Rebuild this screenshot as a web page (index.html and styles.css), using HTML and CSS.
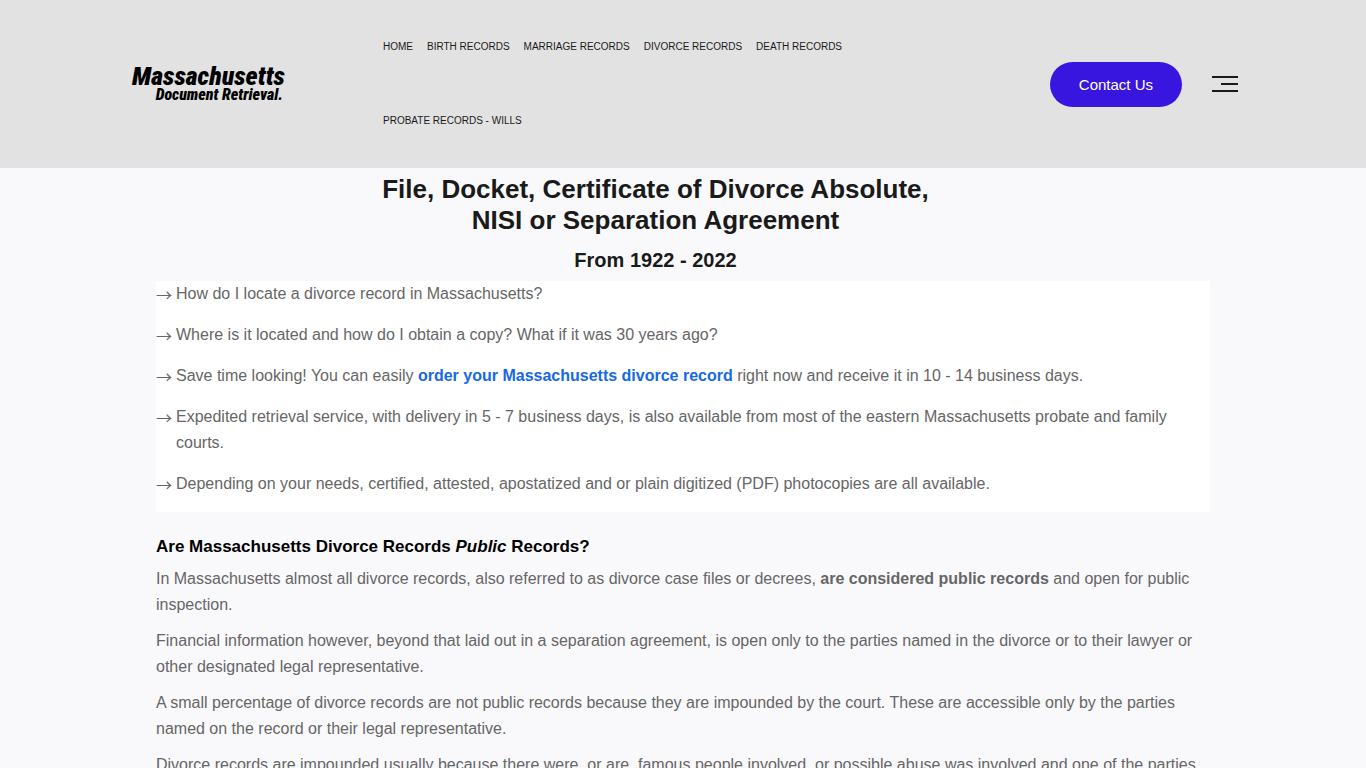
FILE: index.html
```html
<!DOCTYPE html>
<html lang="en">

<head>
    <title>Massachusetts Divorce Records</title>
    <meta charset="UTF-8">
    <meta name="viewport" content="width=device-width, initial-scale=1.0">
    <link rel="stylesheet" href="styles.css">
</head>

<body>
    <header class="site-header">
        <div class="header-inner">
            <a class="logo" href="#">
                <span class="logo-top">Massachusetts</span>
                <span class="logo-bottom">Document Retrieval.</span>
            </a>
            <nav class="main-nav">
                <a href="#">Home</a>
                <a href="#">Birth Records</a>
                <a href="#">Marriage Records</a>
                <a href="#">Divorce Records</a>
                <a href="#">Death Records</a>
                <a href="#">Probate Records - Wills</a>
            </nav>
            <div class="header-right">
                <button class="contact-btn" type="button">Contact Us</button>
                <button class="menu-btn" type="button" aria-label="Menu">
                    <svg width="26" height="16" viewBox="0 0 26 16">
                        <path d="M0 1H26M9 8H26M0 15H26" stroke="#1a1a1a" stroke-width="2" />
                    </svg>
                </button>
            </div>
        </div>
    </header>

    <main class="content">
        <div class="page-title">
            <h1>File, Docket, Certificate of Divorce Absolute, NISI or Separation Agreement</h1>
            <h2>From 1922 - 2022</h2>
        </div>

        <ul class="arrow-list">
            <li>How do I locate a divorce record in Massachusetts?</li>
            <li>Where is it located and how do I obtain a copy? What if it was 30 years ago?</li>
            <li>Save time looking! You can easily <a href="#">order your Massachusetts divorce record</a> right now and receive it in 10 - 14 business days.</li>
            <li>Expedited retrieval service, with delivery in 5 - 7 business days, is also available from most of the eastern Massachusetts probate and family courts.</li>
            <li>Depending on your needs, certified, attested, apostatized and or plain digitized (PDF) photocopies are all available.</li>
        </ul>

        <section class="article">
            <h3>Are Massachusetts Divorce Records <em>Public</em> Records?</h3>
            <p>In Massachusetts almost all divorce records, also referred to as divorce case files or decrees, <strong>are considered public records</strong> and open for public inspection.</p>
            <p>Financial information however, beyond that laid out in a separation agreement, is open only to the parties named in the divorce or to their lawyer or other designated legal representative.</p>
            <p>A small percentage of divorce records are not public records because they are impounded by the court. These are accessible only by the parties named on the record or their legal representative.</p>
            <p>Divorce records are impounded usually because there were, or are, famous people involved, or possible abuse was involved and one of the parties</p>
        </section>
    </main>
</body>

</html>
```
FILE: styles.css
```css
* {
    box-sizing: border-box;
}

body {
    margin: 0;
    background-color: #f9f9fc;
    color: #666;
    font-family: "Liberation Sans", Arial, sans-serif;
    font-size: 16px;
    line-height: 26px;
}

a {
    color: #1668e8;
    font-weight: bold;
    text-decoration: none;
}

.site-header {
    background-color: #e2e2e2;
    padding: 10px 128px;
}

.header-inner {
    display: flex;
    align-items: center;
}

.logo {
    display: flex;
    flex-direction: column;
    align-items: flex-end;
    width: 157px;
    color: #000;
    font-family: Impact, "Roboto Condensed", Roboto, sans-serif;
    font-style: italic;
    font-weight: 900;
    white-space: nowrap;
}

.logo-top {
    font-size: 26px;
    line-height: 22px;
}

.logo-bottom {
    font-size: 16px;
    line-height: 16px;
    padding-right: 2px;
}

.main-nav {
    display: flex;
    flex: 1;
    flex-wrap: wrap;
    column-gap: 14px;
    margin-left: 98px;
    margin-right: 160px;
}

.main-nav a {
    color: #1a1a1a;
    font-size: 10px;
    font-weight: normal;
    line-height: 74px;
    text-transform: uppercase;
}

.header-right {
    display: flex;
    align-items: center;
    gap: 30px;
}

.contact-btn {
    height: 45px;
    padding: 0 29px;
    border: 0;
    border-radius: 23px;
    background-color: #3916e0;
    color: #fff;
    font-family: inherit;
    font-size: 15px;
}

.menu-btn {
    display: flex;
    padding: 0;
    border: 0;
    background: none;
}

.content {
    max-width: 1054px;
    margin: 0 auto;
}

.page-title {
    padding: 6px 55px 8px 0;
    color: #1a1a1a;
    text-align: center;
}

.page-title h1 {
    max-width: 600px;
    margin: 0 auto;
    font-size: 26px;
    line-height: 31px;
}

.page-title h2 {
    margin: 11px 0 0;
    font-size: 20px;
    line-height: 26px;
}

.arrow-list {
    margin: 0;
    padding: 0;
    background-color: #fff;
    list-style: none;
}

.arrow-list li {
    display: flow-root;
    padding: 0 0 15px 20px;
}

.arrow-list li::before {
    content: "→";
    float: left;
    margin-left: -20px;
    font-family: "Noto Sans CJK JP", sans-serif;
}

.article {
    padding-top: 22px;
}

.article h3 {
    margin: 0 0 6px;
    color: #000;
    font-size: 17px;
    line-height: 26px;
}

.article p {
    margin: 0 0 10px;
}
```
